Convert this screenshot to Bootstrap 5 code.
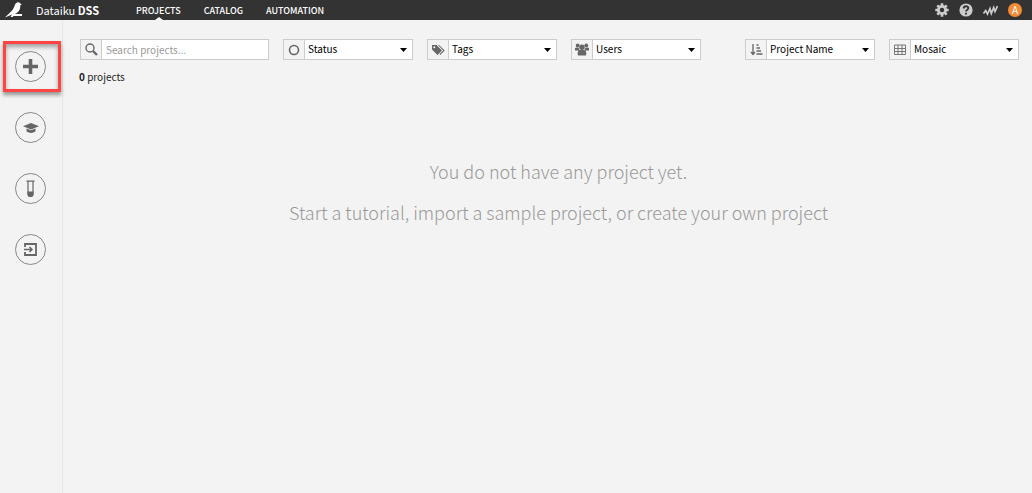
<!DOCTYPE html>
<html lang="en">
<head>
<meta charset="utf-8">
<meta name="viewport" content="width=device-width, initial-scale=1">
<title>Dataiku DSS</title>
<link href="https://cdn.jsdelivr.net/npm/bootstrap@5.3.0/dist/css/bootstrap.min.css" rel="stylesheet">
<style>
  body { background: #f3f3f3; color: #222; font-family: "Noto Sans CJK SC", "Open Sans", sans-serif; font-size: 10px; line-height: 20px; }
  .topbar { height: 20px; background: #333; }
  .topbar a { color: #fff; text-decoration: none; }
  .brand-link { width: 124px; gap: 12px; padding-left: 5px; font-size: 11px; }
  .main-menu { gap: 23px; font-size: 9px; font-weight: 500; }
  .main-menu a { position: relative; display: block; padding: 1px 0 0; line-height: 19px; }
  .main-menu a.active::after { content: ""; position: absolute; left: 50%; bottom: 0; margin-left: -3px; border: 4px solid transparent; border-top: 0; border-bottom: 3px solid #fff; }
  .tools { gap: 10px; padding-right: 10px; }
  .tools a, .tools svg { display: block; }
  .avatar { width: 14px; height: 14px; line-height: 14px; border-radius: 50%; background: #f28c38; text-align: center; }
  .side { width: 63px; border-right: 1px solid #e6e6e6; padding: 31px 1px 0 0; gap: 30px; }
  .round { width: 31px; height: 31px; padding: 0; border: 1px solid #888; border-radius: 50%; background: transparent; color: #666; display: flex; align-items: center; justify-content: center; }
  .marked { position: relative; }
  .marked::after { content: ""; position: absolute; inset: -10px -15px -10px -12px; border: 3px solid #f44; box-shadow: 0 3px 4px #0006, inset 0 3px 4px #0005; pointer-events: none; }
  .filters { gap: 14px; padding: 19px 13px 0 17px; }
  .field { width: 130px; height: 21px; border: 1px solid #ccc; background: #fff; }
  .field.search { width: 189px; }
  .field label { width: 21px; flex: none; background: #f3f3f3; border-right: 1px solid #ccc; color: #666; display: flex; align-items: center; justify-content: center; }
  .field input, .field select { flex: 1; min-width: 0; height: 19px; border: 0; border-radius: 0; padding: 0 4px 1px; font-size: 10px; line-height: 18px; color: #000; background-color: #fff; }
  .field select { padding: 0 16px 1px 3px; background-image: url("data:image/svg+xml,%3Csvg xmlns='http://www.w3.org/2000/svg' viewBox='0 0 7 4'%3E%3Cpath d='M0 0h7L3.500 4z'/%3E%3C/svg%3E"); background-position: right 5px center; background-size: 7px 4px; }
  .field input::placeholder { color: #999; opacity: 1; }
  .summary { padding: 7px 0 0 16px; }
  .empty { padding: 72px 0 0 22px; color: #999; font-size: 18px; font-weight: 300; line-height: 25px; }
  .empty p { margin-bottom: 16px; }
</style>
</head>
<body class="d-flex flex-column min-vh-100">
<header class="topbar d-flex align-items-center">
  <a href="#" class="brand-link d-flex align-items-center">
    <svg width="19" height="18" viewBox="0 0 19 18" fill="#fff" aria-hidden="true"><path d="M9.500 5C10 2.500 12 1 13.500 1.300c1 .1 1.500.7 1.700 1.200l1.600.8-1.500.9c.2 4-1.300 6.300-4.300 8.200l-1.200.6H17v2H8.500L7.600 16H5.500L7 13.500 0 16.500C3 13 8 10 9.500 5Z"/></svg>
    <span>Dataiku <b>DSS</b></span>
  </a>
  <nav aria-label="Main" class="ms-2 ps-1">
    <ul class="main-menu nav flex-nowrap">
      <li><a href="#" class="active" aria-current="page">PROJECTS</a></li>
      <li><a href="#">CATALOG</a></li>
      <li><a href="#">AUTOMATION</a></li>
    </ul>
  </nav>
  <div class="tools d-flex align-items-center ms-auto">
    <a href="#" aria-label="Settings"><svg width="14" height="14" viewBox="0 0 14 14"><g stroke="#ccc" stroke-width="2.600"><path d="M7 .3v13.400M.3 7h13.400M2.300 2.300l9.400 9.400M11.700 2.300l-9.400 9.400"/></g><circle cx="7" cy="7" r="5" fill="#ccc"/><circle cx="7" cy="7" r="2.200" fill="#333"/></svg></a>
    <a href="#" aria-label="Help"><svg width="14" height="14" viewBox="0 0 14 14"><circle cx="7" cy="7" r="6.600" fill="#ccc"/><path d="M4.700 5.500C4.700 2.500 9.500 2.600 9.300 5.200 9.200 6.700 7 6.700 7 8.600M7 9.700v1.800" fill="none" stroke="#333" stroke-width="1.900"/></svg></a>
    <a href="#" aria-label="Activity"><svg width="15" height="12" viewBox="0 0 15 12" fill="none" stroke="#ccc" stroke-width="1.700"><path d="M.5 9.500 2.700 6.500 4.500 10 7 4.500l1.300 5L10.700 3.500l1.300 4L14.500 2"/></svg></a>
    <a href="#" class="avatar" aria-label="Account">A</a>
  </div>
</header>
<div class="d-flex flex-grow-1">
  <aside class="side d-flex flex-column align-items-center flex-shrink-0">
    <div class="marked"><button class="round" type="button" aria-label="New project"><svg width="15" height="15" viewBox="0 0 15 15" fill="currentColor"><path d="M5.700 0h3.600v5.700H15v3.600H9.300V15H5.700V9.300H0V5.700h5.700z"/></svg></button></div>
    <button class="round" type="button" aria-label="Tutorials"><svg width="16" height="12" viewBox="0 0 16 12" fill="currentColor"><path d="m8 1 8 3.300-8 3.200-8-3.200zM3.500 6.500 8 8.300l4.500-1.800v2.800C10 11.500 6 11.500 3.500 9.300z"/></svg></button>
    <button class="round" type="button" aria-label="Samples"><svg width="9" height="18" viewBox="0 0 9 18"><path d="M.5 1.200h8M2 1v13a2.500 2.500 0 0 0 5 0V1" fill="none" stroke="currentColor" stroke-width="1.200"/><path d="M1.500 11.500h6V14a3 3 0 0 1-6 0z" fill="currentColor"/></svg></button>
    <button class="round" type="button" aria-label="Import"><svg width="13" height="13" viewBox="0 0 13 13" fill="none" stroke="currentColor" stroke-width="1.800"><path d="M1 4V1h11v11H1V9"/><path d="M0 6.500h8M5.500 4 8 6.500 5.500 9" stroke-width="1.500"/></svg></button>
  </aside>
  <main class="flex-grow-1">
    <form class="filters d-flex">
      <div class="field search d-flex">
        <label for="q" aria-label="Search"><svg width="13" height="13" viewBox="0 0 13 13" fill="none" stroke="currentColor"><circle cx="5" cy="5" r="4" stroke-width="1.400"/><path d="m8 8 4 4" stroke-width="2.400"/></svg></label>
        <input id="q" type="text" class="form-control" placeholder="Search projects...">
      </div>
      <div class="field d-flex">
        <label for="status" aria-label="Status"><svg width="12" height="12" viewBox="0 0 12 12"><circle cx="6" cy="6" r="4.500" fill="none" stroke="currentColor" stroke-width="1.600"/></svg></label>
        <select id="status" class="form-select"><option>Status</option></select>
      </div>
      <div class="field d-flex">
        <label for="tags" aria-label="Tags"><svg width="14" height="12" viewBox="0 0 14 12" fill="currentColor"><path fill-rule="evenodd" d="M1 1h4.500l5.500 5.500-4.500 4.500L1 5.500zM3.200 2.200a1 1 0 1 0 .1 2 1 1 0 0 0-.1-2z"/><path d="M7 1h1l5.700 5.500L9.300 11l-.8-.8 3.700-3.700z"/></svg></label>
        <select id="tags" class="form-select"><option>Tags</option></select>
      </div>
      <div class="field d-flex">
        <label for="users" aria-label="Users"><svg width="14" height="13" viewBox="0 0 14 13" fill="currentColor"><circle cx="2.700" cy="2.500" r="1.900"/><circle cx="11.300" cy="2.500" r="1.900"/><circle cx="7" cy="4.300" r="2.700"/><path d="M0 7.500V5c1-1 3-.5 4 .2L4.500 7.500zM14 7.500V5c-1-1-3-.5-4 .2L9.500 7.500zM3 12.500C2 9 3.500 7 5 7h4c1.500 0 3 2 2 5.500z"/></svg></label>
        <select id="users" class="form-select"><option>Users</option></select>
      </div>
      <div class="field d-flex ms-auto">
        <label for="sort" aria-label="Sort by"><svg width="13" height="13" viewBox="0 0 13 13" fill="none" stroke="currentColor"><path d="M3 1v10M1 9l2 2.500L5 9" stroke-width="1.300"/><path d="M6.500 2h2M6.500 5h3.500M6.500 8h4.500M6.500 11h6" stroke-width="1.700"/></svg></label>
        <select id="sort" class="form-select"><option>Project Name</option></select>
      </div>
      <div class="field d-flex">
        <label for="view" aria-label="View"><svg width="12" height="11" viewBox="0 0 12 11" fill="none" stroke="#777"><path d="M.5 1h11v9.500H.5zM.5 4.500h11M.5 7.500h11M4 1v9.500M8 1v9.500"/></svg></label>
        <select id="view" class="form-select"><option>Mosaic</option></select>
      </div>
    </form>
    <div class="summary"><b>0</b> projects</div>
    <section class="empty text-center">
      <p>You do not have any project yet.</p>
      <p>Start a tutorial, import a sample project, or create your own project</p>
    </section>
  </main>
</div>
<script src="https://cdn.jsdelivr.net/npm/bootstrap@5.3.0/dist/js/bootstrap.bundle.min.js"></script>
</body>
</html>
